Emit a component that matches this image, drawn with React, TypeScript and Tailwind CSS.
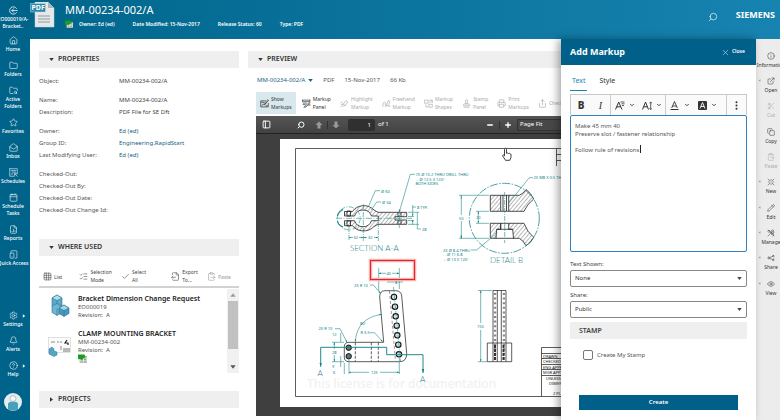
import { useState } from "react";
import type { ReactNode } from "react";
import {
  Bell,
  Calendar,
  Check,
  ChevronDown,
  CircleHelp,
  ClipboardPaste,
  Copy,
  EllipsisVertical,
  ExternalLink,
  Eye,
  FileChartColumn,
  FileOutput,
  Folder,
  FolderSearch,
  Grid3x3,
  House,
  Info,
  ListChecks,
  MailOpen,
  Minus,
  PanelLeft,
  Pencil,
  Plus,
  Printer,
  Scissors,
  Search,
  Settings,
  Share,
  Stamp,
  Star,
  TabletSmartphone,
  X,
} from "lucide-react";

type IconProps = { className?: string; strokeWidth?: number };

const makeIcon = (d: string) =>
  function LineIcon({ className, strokeWidth = 1.5 }: IconProps) {
    return (
      <svg
        viewBox="0 0 24 24"
        className={className}
        fill="none"
        stroke="currentColor"
        strokeWidth={strokeWidth}
        strokeLinecap="round"
        strokeLinejoin="round"
        aria-hidden="true"
      >
        <path d={d} />
      </svg>
    );
  };

const BackIcon = makeIcon("M20 6.500A10 10 0 1 0 20 17.500M22 12H8M12.500 7L7.500 12l5 5");
const ScheduleIcon = makeIcon("M2 2h20v14M2 2v20h12M6 7h12M9 11h9M22 22l-7-7M15 20v-5h5M6 16h4");
const NewIcon = makeIcon("M9 9L3 3M15 9l6-6M9 15l-6 6M15 15l6 6M12 4v3M12 17v3M4 12h3M17 12h3");
const ManageIcon = makeIcon("M3 3l18 18M3 6l3-3 4 4-3 3zM17 21l4-4-4-4-4 4M3 21L15 9M14 4q3-3 6 0l-3 3 1 2 3-1q1 4-3 5t-5-3z");
const ShareIcon = makeIcon("M5.500 9a3 3 0 1 0 0 6 3 3 0 1 0 0-6M8.500 11l8-4M8.500 13l8 4M19 4a2.500 2.500 0 1 0 0 5 2.500 2.500 0 1 0 0-5M19 15a2.500 2.500 0 1 0 0 5 2.500 2.500 0 1 0 0-5");
const ShowMarkupsIcon = makeIcon("M14 5H2v16h20v-9M6 17l3-4 3 3 3-4M11 12L21 2l2 2-10 10M5 9h5M16 18h3");
const MarkupPanelIcon = makeIcon("M1 3h20M1 3v4h20V3M3 11h9M3 15h6M7 20L20 9l2 2-11 10-5 1zM17 16h5");
const HighlightIcon = makeIcon("M9 13l7-9 5 4-7 9zM9 13l-3 4 3 3 5-3M2 21l3-3M2 11l4-4M3 15l3-2");
const FreehandIcon = makeIcon("M2 20Q2 8 6 8t3 8 4 1M13 13L17 4l4 2-3 9-4 3zM17 19h5");
const ShapesIcon = makeIcon("M2 3h9v8H2zM15 3h7v7M22 3l-7 7M5 15v6h5M14 14h8v8h-8z");

const navItems = [
  { icon: House, label: "Home" },
  { icon: Folder, label: "Folders" },
  { icon: FolderSearch, label: "Active Folders" },
  { icon: Star, label: "Favorites" },
  { icon: MailOpen, label: "Inbox" },
  { icon: ScheduleIcon, label: "Schedules" },
  { icon: Calendar, label: "Schedule Tasks" },
  { icon: FileChartColumn, label: "Reports" },
  { icon: TabletSmartphone, label: "Quick Access" },
];

const navBottom = [
  { icon: Settings, label: "Settings", more: true },
  { icon: Bell, label: "Alerts", more: false },
  { icon: CircleHelp, label: "Help", more: true },
];

const commandGroups = [
  [
    { icon: Info, label: "Information" },
    { icon: ExternalLink, label: "Open", more: true },
    { icon: Scissors, label: "Cut", off: true },
  ],
  [
    { icon: Copy, label: "Copy" },
    { icon: ClipboardPaste, label: "Paste", off: true },
    { icon: NewIcon, label: "New", more: true },
  ],
  [
    { icon: Pencil, label: "Edit", more: true },
    { icon: ManageIcon, label: "Manage", more: true },
    { icon: ShareIcon, label: "Share", more: true },
  ],
  [{ icon: Eye, label: "View", more: true }],
];

const properties = [
  [{ name: "Object:", value: "MM-00234-002/A" }],
  [
    { name: "Name:", value: "MM-00234-002/A" },
    { name: "Description:", value: "PDF File for SE Dft" },
  ],
  [
    { name: "Owner:", value: "Ed (ed)", link: true },
    { name: "Group ID:", value: "Engineering.RapidStart", link: true },
    { name: "Last Modifying User:", value: "Ed (ed)", link: true },
  ],
  [
    { name: "Checked-Out:", value: "" },
    { name: "Checked-Out By:", value: "" },
    { name: "Checked-Out Date:", value: "" },
    { name: "Checked-Out Change Id:", value: "" },
  ],
];

const markupTools = [
  { icon: MarkupPanelIcon, top: "Markup", bottom: "Panel", off: false },
  { icon: HighlightIcon, top: "Highlight", bottom: "Markup", off: true },
  { icon: FreehandIcon, top: "Freehand", bottom: "Markup", off: true },
  { icon: ShapesIcon, top: "Markup", bottom: "Shapes", off: true },
  { icon: Stamp, top: "Stamp", bottom: "Panel", off: true },
  { icon: Printer, top: "Print", bottom: "Markups", off: true },
  { icon: Share, top: "Checkin", bottom: "", off: true },
];

const Triangle = ({ className }: { className: string }) => (
  <svg viewBox="0 0 6 6" className={className} aria-hidden="true">
    <path d="M0.3 1.2h5.4L3 4.8z" fill="currentColor" />
  </svg>
);

const PageArrow = ({ className }: { className: string }) => (
  <svg viewBox="0 0 8 8" className={className} aria-hidden="true">
    <path d="M4 .5L7.500 4H5.500v3.500h-3V4H.5z" fill="currentColor" />
  </svg>
);

const SectionBar = ({
  title,
  closed = false,
}: {
  title: string;
  closed?: boolean;
}) => (
  <h2>
    <button className="flex h-[17px] w-full items-center gap-1 bg-[#efefef] pl-[10px] text-[7px] font-semibold text-[#333]">
      <Triangle className={closed ? "size-[5px] -rotate-90" : "size-[5px]"} />
      {title}
    </button>
  </h2>
);

const SolidEdgeBadge = ({ className }: { className: string }) => (
  <svg viewBox="0 0 9 9" className={className} aria-hidden="true">
    <rect x="2" y="2.5" width="7" height="6.3" fill="#e9efe9" stroke="#888" strokeWidth=".5" />
    <path d="M0 .5h6.5L7.5 3 4 5.5 0 5z" fill="#14a01c" />
    <path d="M3 4h2M3 5.6h2M3 7.2h2M6 4h2M6 5.6h2M6 7.2h2" stroke="#557755" strokeWidth=".7" />
  </svg>
);

const PdfIcon = () => (
  <svg viewBox="0 0 26 26" className="size-[26px]" aria-hidden="true">
    <path d="M5 0h13l6 6v19H5z" fill="#e6e9ea" stroke="#c5ced2" strokeWidth=".5" />
    <path d="M18 0v6h6z" fill="#a9b7bd" />
    <path d="M8 14h12M8 17h12M8 20h12" stroke="#8f989c" strokeWidth="1.2" />
    <path d="M.5 1.500h15v8.500H.5z" fill="#2d87a6" stroke="#c9dfe8" strokeWidth=".5" />
    <text x="1.500" y="8.300" fontSize="7" fontWeight="700" fill="#fff">
      PDF
    </text>
  </svg>
);

const CubesIcon = () => (
  <svg viewBox="0 0 20 23" className="h-[23px] w-[20px]" aria-hidden="true">
    <g stroke="#2c7696" strokeWidth=".6" strokeLinejoin="round">
      <path d="M2 4l5-3 5 3v8l-5 3-5-3z" fill="#5aa9c8" />
      <path d="M2 4l5-3 5 3-5 2.5z" fill="#b5dcea" />
      <path d="M7 6.5V15" />
      <path d="M2 12l5-2.5 4 2.5v7l-4 2.5-5-3z" fill="#6db7d3" />
      <path d="M7 14.5v7" />
      <path d="M9 14l5-3 5 3v5.500l-5 3-5-3z" fill="#4798ba" />
      <path d="M9 14l5-3 5 3-5 2.500z" fill="#a6d5e6" />
      <path d="M14 16.500v6" />
    </g>
  </svg>
);

const DrawingThumb = () => (
  <svg viewBox="0 0 23 20" className="h-[20px] w-[23px]" aria-hidden="true">
    <rect x=".3" y=".3" width="22.400" height="15" fill="#fbfbfb" stroke="#c6c6c6" strokeWidth=".5" />
    <path d="M3 5h4M9 5h2M12 5h2M13 9v4" stroke="#8a8a8a" strokeWidth="1" />
    <path d="M19 3l-2 3h3v2" stroke="#222" strokeWidth="1.200" fill="none" />
    <path d="M15 12h7M15 14h7" stroke="#777" strokeWidth="1" />
    <path d="M1 12l3-2 2 2v2l3 1v3l-3 1.500-5-2.500z" fill="#55a5c4" stroke="#2c7696" strokeWidth=".5" />
  </svg>
);

const holes = [
  [394, 297],
  [395, 306.7],
  [395.7, 316.3],
  [396.7, 325.7],
  [397.3, 335.3],
  [398.3, 344.7],
  [399, 354.3],
];

const Drawing = () => (
  <svg
    viewBox="280 139 290 268"
    className="h-[268px] w-[290px] shrink-0 bg-white"
    role="img"
    aria-label="Clamp mounting bracket drawing"
  >
    <defs>
      <pattern id="hatch" width="3" height="3" patternUnits="userSpaceOnUse" patternTransform="rotate(40)">
        <path d="M0 0V3" stroke="#333" strokeWidth=".7" />
      </pattern>
      <marker id="tip" viewBox="0 0 4 4" refX="4" refY="2" markerWidth="4" markerHeight="4" orient="auto-start-reverse">
        <path d="M0 .8L4 2 0 3.200z" fill="#0f7f7f" />
      </marker>
    </defs>

    <text x="307" y="388" fontSize="12" fontWeight="500" fill="#f1f1f1">
      This license is for documentation
    </text>

    {/* sheet frame and title block */}
    <g fill="none" stroke="#333" strokeWidth=".8">
      <path d="M570 148.500H295.500V396.500H570" />
      <path d="M556.500 148.500V166M556.500 154.500H570M556.500 160.500H570" />
      <path d="M541.500 396.500V347.500H570M541.500 353.500H570M541.500 358.500H570M541.500 364.500H570M541.500 369.500H570M541.500 375.500H570" />
    </g>
    <g fontSize="4" fill="#222">
      <text x="543" y="357.500">DRAWN</text>
      <text x="543" y="363">CHECKED</text>
      <text x="543" y="368.500">ENG APPR</text>
      <text x="543" y="374">MGR APPR</text>
      <text x="546" y="380">UNLESS</text>
      <text x="549" y="385">DIMENS</text>
      <text x="553" y="395">2 PL</text>
    </g>

    {/* section A-A */}
    <g stroke="#222" strokeWidth=".8" fill="url(#hatch)">
      <path
        fillRule="evenodd"
        d="M344.500 211.500H352.500C357 204.500 368 203.500 374 210L378 212.300H406.700V216.700H395V220H406.700V224.300H378L374 226.500C368 233 357 232 352.500 225.700H344.500V220.700H354.500A9 9 0 0 0 371.500 220.700H378.300V216H371.500A9 9 0 0 0 354.500 216H344.500Z"
      />
      <path d="M347 211v5h3.500v-5zM347 221v5h3.500v-5zM398 212.300v4.400M401 212.300v4.400M398 220v4.300M401 220v4.300" fill="none" />
    </g>
    <g stroke="#1f8a8a" strokeWidth=".6" fill="none">
      <circle cx="348.700" cy="218.300" r="11.500" strokeDasharray="5 1.500 1 1.500" />
      <path d="M336 218.300H412" strokeDasharray="6 1.500 1 1.500" />
      <path d="M363.300 204V241M349 227V241M378.300 222V241M399.300 209V228" strokeDasharray="5 1 1 1" />
      <path d="M353 237.500H349" markerEnd="url(#tip)" />
      <path d="M359 237.500H363.300" markerEnd="url(#tip)" />
      <path d="M367 237.500H363.300" markerEnd="url(#tip)" />
      <path d="M374 237.500H378.300" markerEnd="url(#tip)" />
      <path d="M368.700 206L375.300 190.700H380" />
      <path d="M371.300 210L376.700 202H381" />
      <path d="M399.300 212L410.300 174.300H415" markerStart="url(#tip)" />
      <path d="M412.700 205V216" markerEnd="url(#tip)" />
      <path d="M412.700 225V220" markerEnd="url(#tip)" />
      <path d="M412.700 207H416M408 216.500H414M408 220.500H414M408 212.300H419M408 224.300H419" />
      <path d="M417.300 212.300V229H421" />
      <path d="M343 209.500Q338 212 337.500 216M343 227Q338 225 337.500 221" strokeWidth="1.200" />
    </g>

    {/* detail B */}
    <g stroke="#222" strokeWidth=".8" fill="url(#hatch)">
      <path d="M490.300 195.300H500.700V211.300H490.300Z" />
      <path d="M508.700 195.300H519.300Q523 194 526 189.500Q531 193 533.700 199Q527 204 524 211.300H508.700Z" />
      <path d="M490.300 223.300H500.700V229.300H496.700L496 238.300H490.300Z" />
      <path d="M508.700 223.300H524Q527 232 533.700 237.300Q531 243 526 245.700Q523 240 519.300 238.300H513.500L512.700 229.300H508.700Z" />
      <path d="M496.700 229.300H512.700M500.700 195.300H508.700M500.700 211.300H508.700M500.700 223.300H508.700M496 238.300H514M503 195V211M506.500 195V211M500.700 223V229" fill="none" />
    </g>
    <g stroke="#1f8a8a" strokeWidth=".6" fill="none">
      <circle cx="504.300" cy="218.300" r="35" strokeDasharray="8 1.500 1.500 1.500" strokeWidth=".8" />
      <path d="M504.700 192V243" strokeDasharray="5 1 1 1" />
      <path d="M461.300 195.300V215M461.300 221V238.300" />
      <path d="M461.300 199V195.300M461.300 235V238.300" markerEnd="url(#tip)" />
      <path d="M459 195.300H489M459 238.300H489M476 211.300H489M476 223.300H489" />
      <path d="M478.300 211.300V223.300" markerStart="url(#tip)" markerEnd="url(#tip)" />
      <path d="M508 204L529.300 177.700H533" />
      <path d="M497.300 232.700L476.700 250H471" markerStart="url(#tip)" />
    </g>

    {/* front view */}
    <g stroke="#333" strokeWidth=".8" fill="none">
      <path d="M349 342.300H383.700L379.700 297Q379.500 290.700 385 290.700H395.500Q401.300 290.700 401.700 296L406.700 353.500Q406.700 361.700 399.500 361.700H349Q344.300 361.700 344.300 357V347Q344.300 342.300 349 342.300Z" />
      <path d="M355.300 342.300V361.700M371.300 342.300V361.700M378.300 342.300V361.700" strokeDasharray="3 1.500" />
      <path d="M389.500 291L395.500 361" strokeDasharray="3 2" strokeWidth=".5" />
    </g>
    <g fill="#d4e4e4" stroke="#111" strokeWidth="1.100">
      {holes.map(([x, y]) => (
        <circle key={y} cx={x} cy={y} r="2.700" />
      ))}
    </g>
    <g fill="#5e7676" stroke="#111" strokeWidth="1">
      <circle cx="348.700" cy="347.700" r="2.700" />
      <circle cx="348.700" cy="356.300" r="2.700" />
    </g>
    <g stroke="#1f8a8a" strokeWidth=".6" fill="none">
      <path d="M393.500 287L400.500 361" strokeDasharray="5 1 1 1" />
      <path d="M355.300 341.700Q357 318 381.700 314.300" markerStart="url(#tip)" markerEnd="url(#tip)" />
      <path d="M370 332.700H374.500L382.800 341.700" markerEnd="url(#tip)" />
      <path d="M370 285H373.300L380.700 293.500" markerEnd="url(#tip)" />
      <path d="M335 328.700H340L347 342.500" markerEnd="url(#tip)" />
      <path d="M320.700 366.700V347.300H386.700V354.700H423V373" markerStart="url(#tip)" markerEnd="url(#tip)" strokeWidth="1" />
      <path d="M334.300 349V342.300" markerEnd="url(#tip)" />
      <path d="M334.300 355V361.700" markerEnd="url(#tip)" />
      <path d="M332 342.300H344M332 361.700H344M340.700 333V342M340.700 356V367M344.300 363V374M349 360V374M399.300 358V374" />
      <path d="M369 372.300H349" markerEnd="url(#tip)" />
      <path d="M380 372.300H399.300" markerEnd="url(#tip)" />
      <path d="M378.700 268V291M399.300 268V289M387 282H403" />
      <path d="M386 273.300H378.700" markerEnd="url(#tip)" />
      <path d="M392 273.300H399.300" markerEnd="url(#tip)" />
      <path d="M480.700 323V290.500" markerEnd="url(#tip)" />
      <path d="M480.700 330V361.700" markerEnd="url(#tip)" />
      <path d="M478 290.500H492M478 361.700H487" />
    </g>

    {/* side view */}
    <g stroke="#333" strokeWidth=".8" fill="none">
      <path d="M493 361.700V290.500H506V361.700M497.300 290.500V361.700M501.300 290.500V361.700M487.300 343H511.700V361.700H487.300Z" />
      <path d="M495 293V361M504 293V361" strokeDasharray="2 2.600" strokeWidth="2.400" stroke="#888" />
      <path d="M495 345V361M503.500 345V361" strokeDasharray="3 1" strokeWidth="2" />
    </g>

    <g fontSize="4" fill="#0f7f7f">
      <text x="415.500" y="176">7X Ø 10.2 THRU DRILL THRU</text>
      <text x="415.500" y="180.500">⌵ Ø 12.5 X 120°</text>
      <text x="415.500" y="185">BOTH SIDES</text>
      <text x="381" y="192.500">Ø 60</text>
      <text x="382" y="204">Ø 34</text>
      <text x="417" y="209">8 TYP.</text>
      <text x="422" y="230.500">28</text>
      <text x="353.500" y="239">32</text>
      <text x="368" y="239">32</text>
      <text x="533.500" y="179">2X M8 X 0.5 THRU</text>
      <text x="443" y="251.500">2X Ø 8.4 THRU</text>
      <text x="443" y="256">⌴ Ø 11 6.8</text>
      <text x="443" y="260.500">⌵ Ø 13 X 120°</text>
      <text x="459" y="219.500">50</text>
      <text x="476" y="219">20</text>
      <text x="386.500" y="275">45</text>
      <text x="395" y="284">8</text>
      <text x="354" y="286.500">2X R 10</text>
      <text x="318.500" y="330">2X R 10</text>
      <text x="360" y="325">80°</text>
      <text x="360.500" y="334">R 3.5</text>
      <text x="332" y="336">12</text>
      <text x="332" y="353.500">28</text>
      <text x="332" y="368">9</text>
      <text x="333" y="374">6</text>
      <text x="371" y="374">125</text>
      <text x="477" y="328">150</text>
    </g>
    <g fontSize="8" fontWeight="300" fill="#26808a" fontFamily="Lato, sans-serif">
      <text x="350" y="250.500">SECTION A-A</text>
      <text x="490" y="262.500">DETAIL B</text>
      <text x="317.500" y="376">A</text>
      <text x="420" y="382">A</text>
    </g>

    {/* user markup */}
    <rect x="370.500" y="260.500" width="44" height="19" fill="none" stroke="#fbb0b0" strokeWidth="3.500" />
    <rect x="370.500" y="260.500" width="44" height="19" fill="none" stroke="#e3262b" strokeWidth="1" />

    {/* pointer */}
    <path
      d="M504.500 149.500q0-1.300 1-1.300t1 1.300v3.800l1-.3 1 .5 1-.2.800.7.7.2v3.300l-1.200 2.800h-4.300l-2.600-4.100q-.7-1.300.4-1.300l1.200.9z"
      fill="#fff"
      stroke="#111"
      strokeWidth=".8"
    />
  </svg>
);

const Sidebar = () => (
  <nav className="flex w-[30px] shrink-0 flex-col overflow-hidden bg-[#00648a] pr-1 pt-[5px] pb-[9px] text-[5px] leading-[7px] font-medium text-white">
    <a href="#" className="flex flex-col items-center pb-[5px] text-center">
      <BackIcon className="size-[11px] p-px" strokeWidth={2} />
      <span>EO000019/A-</span>
      <span>Bracket..</span>
    </a>
    {navItems.map(({ icon: Icon, label }) => (
      <a key={label} href="#" className="flex flex-col items-center pb-[7px] text-center">
        <Icon className="size-[11px] p-px" strokeWidth={1.5} />
        <span className={label === "Quick Access" ? "whitespace-nowrap" : ""}>
          {label}
        </span>
      </a>
    ))}
    <div className="mt-auto">
      {navBottom.map(({ icon: Icon, label, more }) => (
        <a key={label} href="#" className="relative flex flex-col items-center pb-[7px]">
          <Icon className="size-[11px] p-px" strokeWidth={1.5} />
          {label}
          {more && (
            <Triangle className="absolute top-1 right-0 size-[4px] -rotate-90" />
          )}
        </a>
      ))}
    </div>
    <button aria-label="Profile" className="mt-2 flex justify-center">
      <svg viewBox="0 0 18 18" className="size-[18px]" aria-hidden="true">
        <circle cx="9" cy="9" r="9" fill="#e4edf0" />
        <path d="M4 16.500V11Q4 8.500 9 8.500T14 11v5.500Q9 19 4 16.500z" fill="#4aa0ba" />
        <circle cx="9" cy="5.500" r="3" fill="#f7f7f7" stroke="#9aa7ac" strokeWidth=".7" />
      </svg>
    </button>
  </nav>
);

const Header = () => (
  <header className="flex h-[39px] shrink-0 bg-linear-to-r from-[#00668c] to-[#1783b0] text-white">
    <div className="pt-[2px]">
      <PdfIcon />
    </div>
    <div className="min-w-0 flex-1 pl-[9px]">
      <h1 className="pt-[3px] text-[11px] leading-[14px]">MM-00234-002/A</h1>
      <div className="flex items-center gap-[18px] pt-[3px] text-[5px] leading-[8px] font-semibold">
        <span className="flex items-center gap-[6px]">
          <SolidEdgeBadge className="size-2" />
          Owner: Ed (ed)
        </span>
        <span>Date Modified: 15-Nov-2017</span>
        <span>Release Status: 60</span>
        <span>Type: PDF</span>
      </div>
    </div>
    <button aria-label="Search" className="flex h-[34px] items-center pr-[18px]">
      <Search className="size-[10px] -scale-x-100" strokeWidth={1.5} />
    </button>
    <span className="pt-[9px] pr-[5px] text-[9px] leading-3 font-bold">SIEMENS</span>
  </header>
);

const ToolText = ({ children }: { children: ReactNode }) => (
  <span className="flex flex-col text-left text-[5px] leading-[8px]">{children}</span>
);

const WhereUsed = () => (
  <section className="pt-[21px]">
    <SectionBar title="WHERE USED" />
    <div className="mt-3 flex h-[20px] items-start justify-between border-b-2 border-[#d2d2d2] pr-2 pl-1 text-[#444]">
      <button className="flex items-center gap-0.5 pt-1 pr-2">
        <Grid3x3 className="size-[9px]" strokeWidth={1.5} />
        <ToolText>List</ToolText>
      </button>
      <button className="flex items-center gap-0.5">
        <ListChecks className="size-[9px]" strokeWidth={1.5} />
        <ToolText>
          <span>Selection</span>
          <span>Mode</span>
        </ToolText>
      </button>
      <button className="flex items-center gap-0.5">
        <Check className="size-[9px]" strokeWidth={1.5} />
        <ToolText>
          <span>Select</span>
          <span>All</span>
        </ToolText>
      </button>
      <button className="flex items-center gap-0.5 pl-4">
        <FileOutput className="size-[9px]" strokeWidth={1.5} />
        <ToolText>
          <span>Export</span>
          <span>To...</span>
        </ToolText>
      </button>
      <button className="flex items-center gap-0.5 pt-1 text-[#999]">
        <ClipboardPaste className="size-[9px]" strokeWidth={1.5} />
        <ToolText>Paste</ToolText>
      </button>
    </div>
    <div className="flex pt-px">
      <ul className="flex-1 pt-[5px] pl-[9px] text-[6px] leading-[8px] text-[#555]">
        <li className="flex h-[35px] gap-2 pl-[2px]">
          <CubesIcon />
          <div>
            <h3 className="text-[7px] leading-[9px] font-semibold text-[#222]">
              Bracket Dimension Change Request
            </h3>
            <p>EO000019</p>
            <p>Revision: &nbsp;A</p>
          </div>
        </li>
        <li className="flex gap-[7px]">
          <div className="pt-2">
            <DrawingThumb />
          </div>
          <div>
            <h3 className="text-[7px] leading-[9px] font-semibold text-[#222]">
              CLAMP MOUNTING BRACKET
            </h3>
            <p>MM-00234-002</p>
            <p>Revision: &nbsp;A</p>
            <SolidEdgeBadge className="size-[9px]" />
          </div>
        </li>
      </ul>
      <div className="flex h-[84px] w-3 flex-col items-center bg-[#f1f1f1] text-[#555]">
        <div className="flex h-3 items-center">
          <Triangle className="size-[6px] rotate-180 text-[#999]" />
        </div>
        <div className="h-12 w-[10px] bg-[#c1c1c1]" />
        <div className="mt-auto flex h-3 items-center">
          <Triangle className="size-[6px]" />
        </div>
      </div>
    </div>
  </section>
);

const PropertiesColumn = () => (
  <div className="w-[200px] shrink-0">
    <section>
      <SectionBar title="PROPERTIES" />
      <div className="flex flex-col gap-[7px] pt-[7px] pb-px text-[6px]">
        {properties.map((group) => (
          <dl key={group[0].name}>
            {group.map(({ name, value, link }) => (
              <div key={name} className="flex h-3 items-center leading-3">
                <dt className="w-20 whitespace-nowrap text-[#555]">{name}</dt>
                <dd className="text-[#444]">
                  {link ? (
                    <a href="#" className="text-[#17647f]">
                      {value}
                    </a>
                  ) : (
                    value
                  )}
                </dd>
              </div>
            ))}
          </dl>
        ))}
      </div>
    </section>
    <div className="pt-px">
      <WhereUsed />
    </div>
    <div className="pt-[18px]">
      <SectionBar title="PROJECTS" closed />
    </div>
  </div>
);

const Preview = () => (
  <section className="min-w-0 flex-1 overflow-hidden pb-1">
    <SectionBar title="PREVIEW" />
    <div className="pl-2">
      <div className="flex h-6 items-center gap-[10px] text-[6px] text-[#555]">
        <button className="flex items-center gap-[3px] pl-px text-[#17647f]">
          MM-00234-002/A
          <Triangle className="size-[5px]" />
        </button>
        <span>PDF</span>
        <span>15-Nov-2017</span>
        <span>66 Kb</span>
      </div>
      <div className="flex h-6 gap-[3px]">
        <button className="flex h-[22px] shrink-0 items-center gap-0.5 bg-[#d8e8ed] px-1 text-[#333]">
          <ShowMarkupsIcon className="size-[9px]" strokeWidth={2} />
          <ToolText>
            <span>Show</span>
            <span>Markups</span>
          </ToolText>
        </button>
        {markupTools.map(({ icon: Icon, top, bottom, off }) => (
          <button
            key={top + bottom}
            disabled={off}
            className="flex h-[22px] shrink-0 items-center gap-0.5 px-[3px] text-[#333] disabled:text-[#aaa]"
          >
            <Icon className="size-[9px]" strokeWidth={1.8} />
            <ToolText>
              <span>{top}</span>
              {bottom && <span>{bottom}</span>}
            </ToolText>
          </button>
        ))}
      </div>
      <div className="bg-[#3f3f3f]">
        <div className="flex h-[18px] items-center border-b border-[#222] bg-linear-to-b from-[#555] to-[#424242] pl-[6px] text-[6px] text-white">
          <button aria-label="Toggle sidebar">
            <PanelLeft className="size-[9px]" strokeWidth={2.5} />
          </button>
          <button aria-label="Find" className="pl-[26px]">
            <Search className="size-2 -scale-x-100" strokeWidth={3} />
          </button>
          <button aria-label="Previous page" className="pl-[10px] text-[#999]">
            <PageArrow className="size-2" />
          </button>
          <button aria-label="Next page" className="ml-1 border-l border-[#333] pl-1 text-[#999]">
            <PageArrow className="size-2 rotate-180" />
          </button>
          <input
            aria-label="Page"
            defaultValue="1"
            className="ml-2 h-3 w-[27px] rounded-xs bg-[#303030] pr-1 text-right"
          />
          <span className="pl-[3px]">of 1</span>
          <div className="ml-auto flex items-center gap-[5px]">
            <button aria-label="Zoom out">
              <Minus className="size-2" strokeWidth={4} />
            </button>
            <button aria-label="Zoom in" className="border-l border-[#333] pl-1">
              <Plus className="size-2" strokeWidth={4} />
            </button>
            <select aria-label="Zoom" className="h-3 w-11 appearance-none border border-r-0 border-[#333] bg-[#484848] pl-0.5 text-[6px]">
              <option>Page Fit</option>
            </select>
          </div>
        </div>
        <div className="flex overflow-hidden pt-[5px] pb-[9px] pl-6">
          <Drawing />
        </div>
      </div>
    </div>
  </section>
);

const Select = ({ label, id, value }: { label: string; id: string; value: string }) => (
  <div className="pt-1">
    <label htmlFor={id} className="block h-[10px] text-[6px] leading-[8px] text-[#444]">
      {label}
    </label>
    <div className="relative">
      <select
        id={id}
        className="block h-[17px] w-full appearance-none rounded-xs border border-[#888] bg-white pl-1 text-[6px] text-[#333]"
      >
        <option>{value}</option>
      </select>
      <Triangle className="pointer-events-none absolute top-[6px] right-[5px] size-[5px] text-[#444]" />
    </div>
  </div>
);

const MarkupPanel = () => {
  const [note, setNote] = useState(
    "Make 45 mm 40\nPreserve slot / fastener relationship\n\nFollow rule of revisions"
  );

  return (
    <aside className="z-10 flex w-[195px] shrink-0 flex-col bg-white shadow-[-3px_0_8px_rgba(0,0,0,0.35)]">
      <div className="flex h-[26px] items-center justify-between bg-[#00608a] pr-[11px] pl-[9px] text-white">
        <h2 className="text-[9px] font-bold">Add Markup</h2>
        <button className="flex items-center gap-0.5 text-[5px] font-semibold">
          <X className="size-[9px]" strokeWidth={1.2} />
          Close
        </button>
      </div>
      <div className="flex flex-1 flex-col px-[9px] pt-2">
        <div className="flex gap-[10px] text-[7px] text-[#333]">
          <button className="h-[18px] border-b border-[#1b83b3] px-0.5 text-[#1b83b3]">
            Text
          </button>
          <button className="h-[18px] border-b border-transparent px-0.5">Style</button>
        </div>
        <div className="mt-[3px] flex h-[21px] items-center border border-b-0 border-[#c8c8c8] bg-[#fafafa] text-[#333]">
          <button aria-label="Bold" className="w-5 text-[10px] font-extrabold">
            B
          </button>
          <button
            aria-label="Italic"
            className="h-full w-5 border-r border-[#ccc] font-['Liberation_Serif',serif] text-[10px] italic"
          >
            I
          </button>
          <button aria-label="Font family" className="flex w-[27px] items-center justify-center gap-1">
            <svg viewBox="0 0 10 9" className="h-[9px] w-[10px]" fill="none" stroke="currentColor">
              <path d="M.5 8.500L3.700 1 7 8.500M1.700 5.800h4" />
              <path d="M5.500 1h4M6.500 2.800h3M7 4.500h2" strokeWidth=".8" />
            </svg>
            <ChevronDown className="size-[6px]" strokeWidth={3.5} />
          </button>
          <button aria-label="Font size" className="flex h-full w-[28px] items-center justify-center gap-1 border-r border-[#ccc]">
            <svg viewBox="0 0 10 9" className="h-[9px] w-[10px]" fill="none" stroke="currentColor">
              <path d="M.5 8.500L3.500 1l3 7.500M1.600 5.800h4" />
              <path d="M8.700 1v7.500M7.500 2.200L8.700 1l1.200 1.200M7.500 7.300l1.200 1.200 1.200-1.200" strokeWidth=".8" />
            </svg>
            <ChevronDown className="size-[6px]" strokeWidth={3.5} />
          </button>
          <button aria-label="Font color" className="flex w-[28px] items-center justify-center gap-[5px]">
            <svg viewBox="0 0 9 9" className="size-[9px]" fill="none" stroke="currentColor">
              <path d="M1.700 7L4.500.5 7.300 7M2.700 5h3.600" strokeWidth=".9" />
              <path d="M.5 8.500h8" />
            </svg>
            <ChevronDown className="size-[6px]" strokeWidth={3.5} />
          </button>
          <button aria-label="Highlight color" className="flex w-[26px] items-center justify-center gap-1">
            <svg viewBox="0 0 9 9" className="size-[9px]" fill="none">
              <rect width="9" height="9" rx="1" fill="#333" />
              <path d="M2 7.500L4.500 1.500 7 7.500M3 5.500h3" stroke="#fff" strokeWidth=".9" />
            </svg>
            <ChevronDown className="size-[6px]" strokeWidth={3.5} />
          </button>
          <button aria-label="More" className="ml-auto flex h-full w-5 items-center justify-center border-l border-[#ccc]">
            <EllipsisVertical className="size-[11px]" strokeWidth={2.5} />
          </button>
        </div>
        <div className="relative mb-1">
          <textarea
            aria-label="Markup text"
            value={note}
            onChange={(e) => setNote(e.target.value)}
            className="block h-[137px] w-full resize-none rounded-xs border border-[#2f80c0] px-1 py-[6px] text-[6px] leading-[8px] text-[#555] caret-transparent outline-none"
          />
          <span className="pointer-events-none absolute top-[30px] left-[70px] h-2 w-px bg-[#222]" />
        </div>
        <Select label="Text Shown:" id="shown" value="None" />
        <Select label="Share:" id="share" value="Public" />
        <h3 className="mt-1 h-[17px] bg-[#efefef] pl-[9px] text-[7px] leading-[17px] font-semibold text-[#444]">
          STAMP
        </h3>
        <label className="mt-[11px] flex items-center gap-1 pl-[13px] text-[6px] text-[#555]">
          <input
            type="checkbox"
            className="size-[10px] appearance-none rounded-xs border border-[#777] bg-white checked:bg-[#00608a]"
          />
          Create My Stamp
        </label>
        <button className="mx-[9px] mt-auto mb-[10px] h-[15px] bg-[#00608a] text-[6px] font-semibold text-white">
          Create
        </button>
      </div>
    </aside>
  );
};

const CommandBar = () => (
  <div className="flex w-6 shrink-0 flex-col gap-px overflow-hidden bg-[#ececec] pt-[12px] text-[5px] leading-[8px]">
    {commandGroups.map((group) => (
      <div key={group[0].label} className="flex flex-col">
        {group.map(({ icon: Icon, label, more, off }) => (
          <button
            key={label}
            disabled={off}
            className="relative flex h-[25px] w-[30px] flex-col items-center text-[#333] disabled:text-[#aaa]"
          >
            <Icon className="size-[10px] p-px" strokeWidth={1.5} />
            {label}
            {more && (
              <Triangle className="absolute top-[3px] left-[2px] size-[3px] rotate-90 text-[#999]" />
            )}
          </button>
        ))}
      </div>
    ))}
  </div>
);

const App = () => {
  return (
    <div className="flex min-h-screen bg-white font-['Noto_Sans',sans-serif]">
      <Sidebar />
      <div className="flex min-w-0 flex-1 flex-col">
        <Header />
        <div className="flex flex-1">
          <main className="flex min-w-0 flex-1 gap-[9px] pt-3 pl-[9px]">
            <PropertiesColumn />
            <Preview />
          </main>
          <MarkupPanel />
          <CommandBar />
        </div>
      </div>
    </div>
  );
};

export default App;
